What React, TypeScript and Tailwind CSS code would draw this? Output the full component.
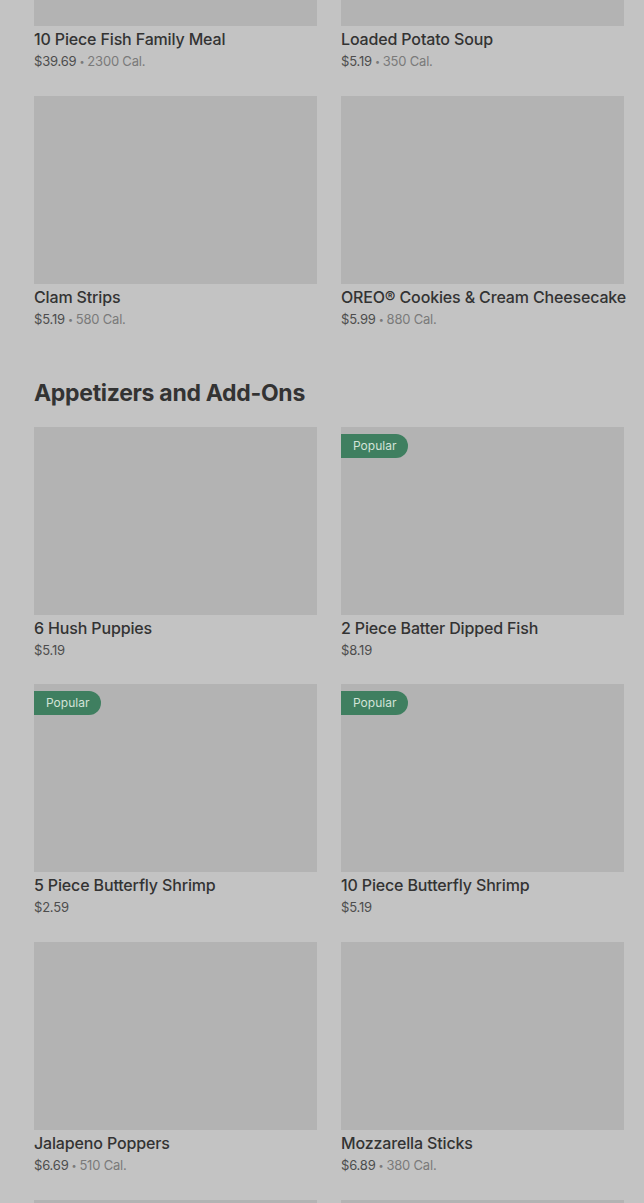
import React from 'react';

type Item = { name: string; price: string; cal?: string; popular?: boolean };

const topItems: Item[] = [
    { name: "10 Piece Fish Family Meal", price: "$39.69", cal: "2300 Cal." },
    { name: "Loaded Potato Soup", price: "$5.19", cal: "350 Cal." },
    { name: "Clam Strips", price: "$5.19", cal: "580 Cal." },
    { name: "OREO® Cookies & Cream Cheesecake", price: "$5.99", cal: "880 Cal." },
];

const appetizers: Item[] = [
    { name: "6 Hush Puppies", price: "$5.19" },
    { name: "2 Piece Batter Dipped Fish", price: "$8.19", popular: true },
    { name: "5 Piece Butterfly Shrimp", price: "$2.59", popular: true },
    { name: "10 Piece Butterfly Shrimp", price: "$5.19", popular: true },
    { name: "Jalapeno Poppers", price: "$6.69", cal: "510 Cal." },
    { name: "Mozzarella Sticks", price: "$6.89", cal: "380 Cal." },
    { name: "", price: "" },
    { name: "", price: "" },
];

function Card({ item }: { item: Item }) {
    return (
        <div className="flex flex-col">
            <div className="relative h-[188px] bg-[#b3b3b3]">
                {item.popular && (
                    <span className="absolute left-0 top-[7px] h-6 px-3 flex items-center rounded-r-full bg-[#3f7f60] text-[12px] text-[#d3e3d8]">
                        Popular
                    </span>
                )}
            </div>
            <div className="mt-px h-6 flex items-center text-[16px] font-medium tracking-[-0.15px] text-[#333333] whitespace-nowrap">
                {item.name}
            </div>
            <div className="mt-px h-5 flex items-center text-[13px] tracking-[-0.2px] text-[#4d4d4d]">
                {item.price}
                {item.cal && (
                    <>
                        <span className="mx-[3px] text-[9px] text-[#7a7a7a]">•</span>
                        <span className="text-[#7a7a7a]">{item.cal}</span>
                    </>
                )}
            </div>
        </div>
    );
}

export default function App() {
    return (
        <div className="w-[644px] h-[1203px] overflow-hidden bg-[#c3c3c3] font-['Inter',sans-serif]">
            <div className="pl-[34px] pr-5 -mt-[162px]">
                <div className="grid grid-cols-2 gap-x-6 gap-y-6">
                    {topItems.map((item) => (
                        <Card key={item.name} item={item} />
                    ))}
                </div>
                <h2 className="mt-[46px] mb-[17px] h-[34px] flex items-center text-[23px] font-bold tracking-[-0.3px] text-[#333333]">
                    Appetizers and Add-Ons
                </h2>
                <div className="grid grid-cols-2 gap-x-6 gap-y-6">
                    {appetizers.map((item, i) => (
                        <div key={i} className={i < 2 ? '-mb-px' : ''}>
                            <Card item={item} />
                        </div>
                    ))}
                </div>
            </div>
        </div>
    );
}
